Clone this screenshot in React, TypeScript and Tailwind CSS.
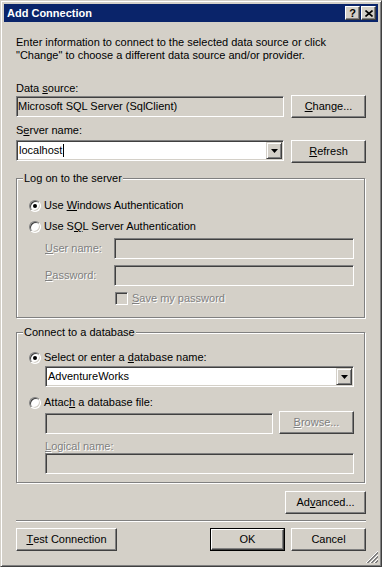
import React from 'react';

type Kids = { children?: React.ReactNode; className?: string };

const dim = 'text-[#808080] [text-shadow:1px_1px_0_#fff]';

function U({ children }: Kids) {
  return <span className="underline underline-offset-1">{children}</span>;
}

// sunken 3d edit box
function Field({ children, className = '' }: Kids) {
  return (
    <div
      className={`flex h-[21px] items-center overflow-hidden border border-t-[#808080] border-l-[#808080] border-b-white border-r-white pl-[1px] shadow-[inset_1px_1px_0_#404040,inset_-1px_-1px_0_#d4d0c8] ${className}`}
    >
      {children}
    </div>
  );
}

function Btn({
  children,
  className = '',
  disabled = false,
  primary = false,
}: Kids & { disabled?: boolean; primary?: boolean }) {
  return (
    <div className={`h-[23px] shrink-0 ${primary ? 'border border-black' : ''} ${className}`}>
      <div
        className={`flex h-full w-full items-center justify-center border border-t-white border-l-white border-b-[#404040] border-r-[#404040] shadow-[inset_-1px_-1px_0_#808080] ${
          disabled ? dim : ''
        }`}
      >
        {children}
      </div>
    </div>
  );
}

function Combo({ children, className = '' }: Kids) {
  return (
    <div
      className={`flex h-[21px] border border-t-[#808080] border-l-[#808080] border-b-white border-r-white bg-white p-[1px] shadow-[inset_1px_1px_0_#404040,inset_-1px_-1px_0_#d4d0c8] ${className}`}
    >
      <div className="flex flex-1 items-center pl-[1px]">{children}</div>
      <div className="flex w-[16px] items-center justify-center border border-t-[#d4d0c8] border-l-[#d4d0c8] border-b-[#404040] border-r-[#404040] bg-[#d4d0c8] shadow-[inset_1px_1px_0_#fff,inset_-1px_-1px_0_#808080]">
        <svg width="7" height="4" viewBox="0 0 7 4">
          <path d="M0 0h7L3.5 4z" fill="#000" />
        </svg>
      </div>
    </div>
  );
}

function Radio({ checked = false, children }: Kids & { checked?: boolean }) {
  return (
    <div className="flex h-[13px] items-center gap-[3px]">
      <div className="flex h-[12px] w-[12px] items-center justify-center rounded-full border border-t-[#808080] border-l-[#808080] border-b-white border-r-white bg-white shadow-[inset_1px_1px_0_#404040,inset_-1px_-1px_0_#d4d0c8]">
        {checked && <div className="h-[4px] w-[4px] rounded-full bg-black" />}
      </div>
      <span>{children}</span>
    </div>
  );
}

function Group({ title, className = '', children }: Kids & { title: string }) {
  return (
    <div
      className={`relative w-[349px] border border-[#808080] pl-[12px] pr-[10px] shadow-[1px_1px_0_#fff,inset_1px_1px_0_#fff] ${className}`}
    >
      <span className="absolute left-[6px] top-[-7px] bg-[#d4d0c8] px-[1px]">{title}</span>
      {children}
    </div>
  );
}

function CaptionBtn({ children }: Kids) {
  return (
    <div className="flex h-[14px] w-[15px] items-center justify-center border border-t-white border-l-white border-b-[#404040] border-r-[#404040] bg-[#d4d0c8] text-[11px] leading-none font-bold text-black shadow-[inset_-1px_-1px_0_#808080]">
      {children}
    </div>
  );
}

export default function App() {
  return (
    <div className="relative flex h-[567px] w-[382px] flex-col border border-t-[#d4d0c8] border-l-[#d4d0c8] border-b-[#404040] border-r-[#404040] bg-[#d4d0c8] p-[3px] font-['Liberation_Sans',Arial,sans-serif] text-[11px] leading-[13px] text-black shadow-[inset_1px_1px_0_#fff,inset_-1px_-1px_0_#808080]">
      {/* title bar */}
      <div className="flex h-[18px] shrink-0 items-center bg-[#0a246a] pl-[3px] pr-[2px]">
        <span className="font-bold text-white">Add Connection</span>
        <div className="ml-auto flex gap-[1px]">
          <CaptionBtn>?</CaptionBtn>
          <CaptionBtn>
            <svg width="8" height="7" viewBox="0 0 8 7">
              <path d="M0.5 0.5L7.5 6.5M7.5 0.5L0.5 6.5" stroke="#000" strokeWidth="1.6" />
            </svg>
          </CaptionBtn>
        </div>
      </div>

      <div className="flex flex-col px-[12px]">
        <p className="mt-[14px]">
          Enter information to connect to the selected data source or click
          <br />
          "Change" to choose a different data source and/or provider.
        </p>

        <div className="mt-[20px]">
          Data <U>s</U>ource:
        </div>
        <div className="flex gap-[7px]">
          <Field className="mt-[1px] flex-1 bg-[#d4d0c8]">Microsoft SQL Server (SqlClient)</Field>
          <Btn className="w-[75px]">
            <U>C</U>hange...
          </Btn>
        </div>

        <div className="mt-[6px]">
          S<U>e</U>rver name:
        </div>
        <div className="mt-[3px] flex gap-[7px]">
          <Combo className="flex-1">
            localhost
            <span className="ml-[1px] h-[13px] w-[1px] bg-black" />
          </Combo>
          <Btn className="w-[75px]">
            <U>R</U>efresh
          </Btn>
        </div>

        <Group title="Log on to the server" className="mt-[15px] h-[140px] pt-[20px]">
          <Radio checked>
            Use <U>W</U>indows Authentication
          </Radio>
          <div className="mt-[8px]">
            <Radio>
              Use S<U>Q</U>L Server Authentication
            </Radio>
          </div>
          <div className="mt-[5px] flex items-center pl-[16px]">
            <span className={`w-[69px] ${dim}`}>
              <U>U</U>ser name:
            </span>
            <Field className="flex-1 bg-[#d4d0c8]" />
          </div>
          <div className="mt-[6px] flex items-center pl-[16px]">
            <span className={`w-[69px] ${dim}`}>
              <U>P</U>assword:
            </span>
            <Field className="flex-1 bg-[#d4d0c8]" />
          </div>
          <div className="mt-[6px] flex h-[13px] items-center gap-[4px] pl-[86px]">
            <div className="h-[13px] w-[13px] border border-t-[#808080] border-l-[#808080] border-b-white border-r-white bg-[#d4d0c8] shadow-[inset_1px_1px_0_#404040,inset_-1px_-1px_0_#d4d0c8]" />
            <span className={dim}>
              <U>S</U>ave my password
            </span>
          </div>
        </Group>

        <Group title="Connect to a database" className="mt-[14px] h-[151px] pt-[18px]">
          <Radio checked>
            Select or enter a <U>d</U>atabase name:
          </Radio>
          <Combo className="ml-[16px] mt-[2px]">AdventureWorks</Combo>
          <div className="mt-[9px]">
            <Radio>
              Attac<U>h</U> a database file:
            </Radio>
          </div>
          <div className="ml-[16px] mt-[2px] flex gap-[6px]">
            <Field className="mt-[2px] flex-1 bg-[#d4d0c8]" />
            <Btn disabled className="w-[75px]">
              <U>B</U>rowse...
            </Btn>
          </div>
          <div className={`ml-[16px] mt-[6px] ${dim}`}>
            <U>L</U>ogical name:
          </div>
          <Field className="ml-[16px] bg-[#d4d0c8]" />
        </Group>

        <div className="mt-[8px] flex justify-end">
          <Btn className="w-[81px]">
            Ad<U>v</U>anced...
          </Btn>
        </div>

        <div className="mt-[6px] h-[2px] border-t border-b border-t-[#808080] border-b-white" />

        <div className="mt-[6px] flex">
          <Btn className="w-[101px]">
            <U>T</U>est Connection
          </Btn>
          <Btn primary className="ml-auto w-[75px]">
            OK
          </Btn>
          <Btn className="ml-[6px] w-[75px]">Cancel</Btn>
        </div>
      </div>

      {/* size grip */}
      <svg className="absolute bottom-[3px] right-[3px]" width="12" height="12" viewBox="0 0 12 12">
        {[0, 4, 8].map((d) => (
          <g key={d}>
            <line x1={12} y1={d} x2={d} y2={12} stroke="#fff" />
            <line x1={12} y1={d + 1} x2={d + 1} y2={12} stroke="#808080" />
            <line x1={12} y1={d + 2} x2={d + 2} y2={12} stroke="#808080" />
          </g>
        ))}
      </svg>
    </div>
  );
}
